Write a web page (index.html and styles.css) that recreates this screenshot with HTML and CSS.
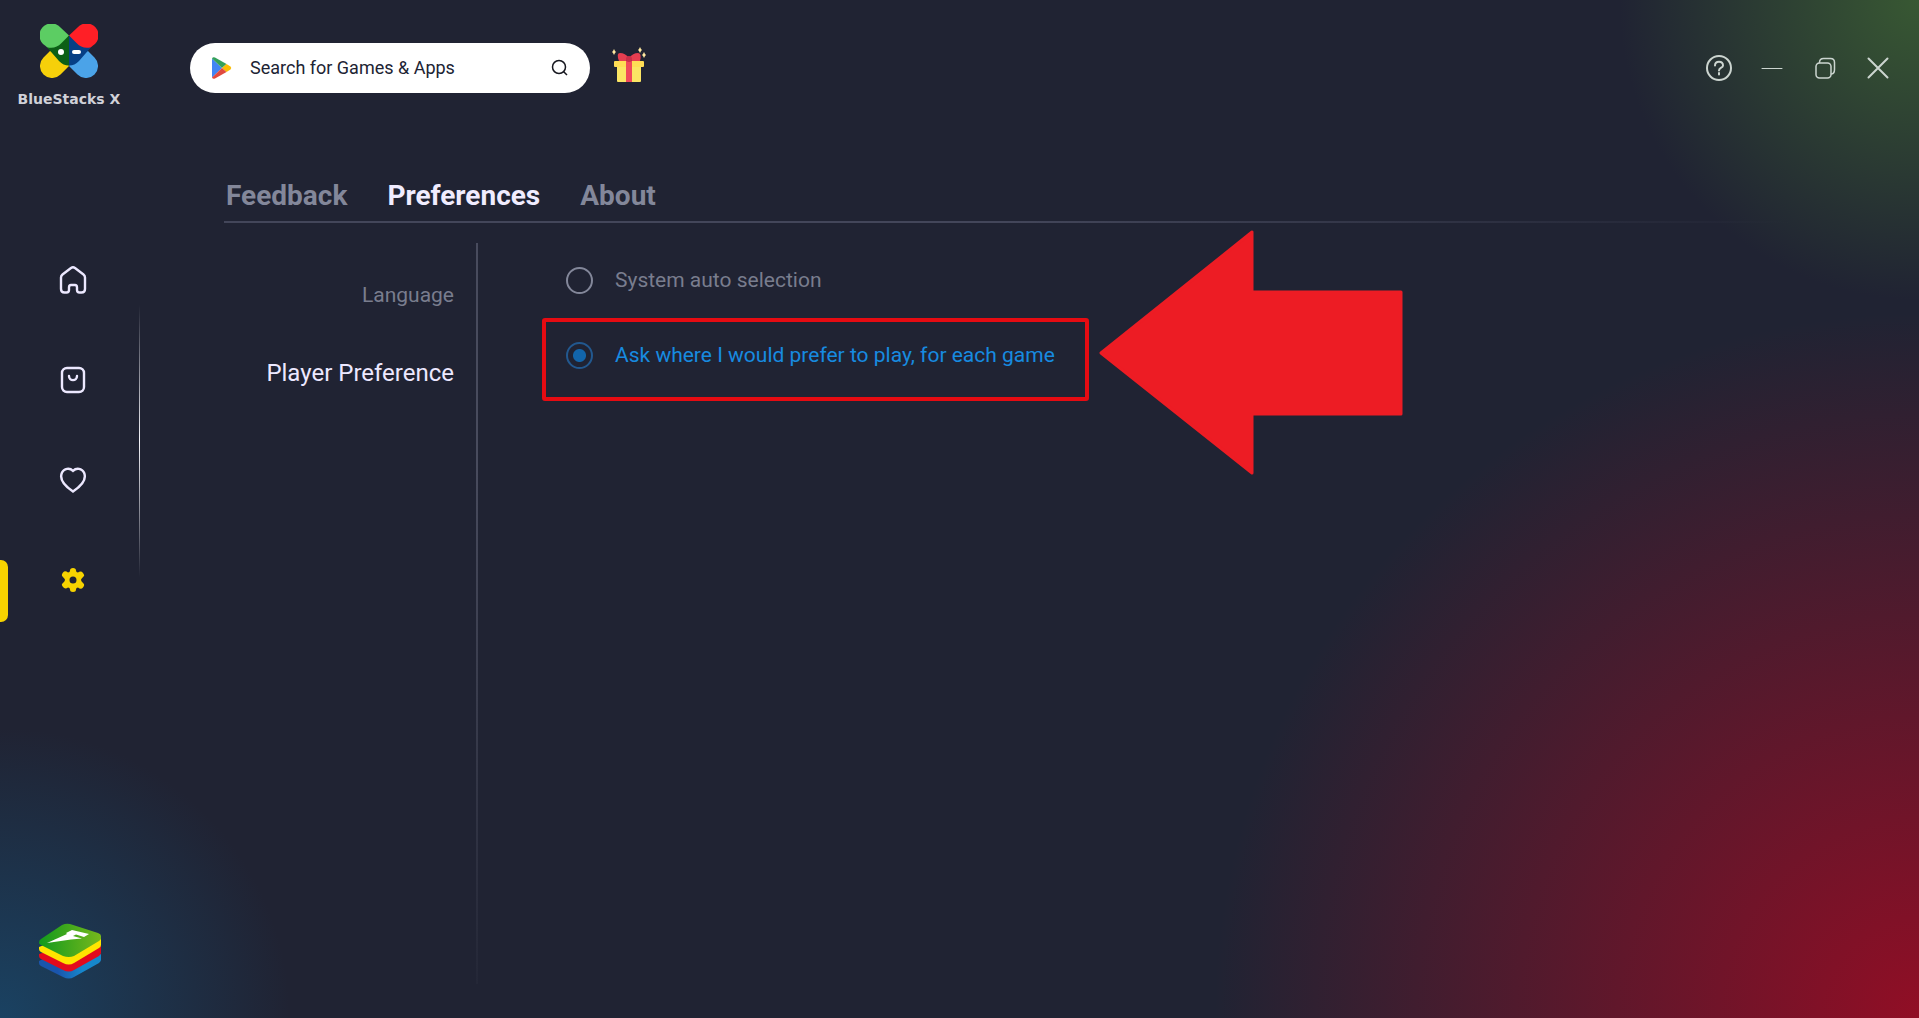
FILE: index.html
```html
<!DOCTYPE html>
<html lang="en">
<head>
<meta charset="utf-8">
<meta name="viewport" content="width=device-width, initial-scale=1">
<title>BlueStacks X</title>
<link rel="stylesheet" href="styles.css">
</head>
<body>
<div class="app">
  <aside class="sidebar">
    <a class="brand" href="#">
      <svg class="brand-mark" viewBox="0 0 58 54" aria-hidden="true">
        <path fill="#5ccd63" d="M29 11.500L20.500 3.500A12 12 0 1 0 5 21.500L11 26.500L20 27Z"/>
        <path fill="#ff1f26" d="M29 11.500L37.500 3.500A12 12 0 1 1 53 21.500L47 26.500L38 27Z"/>
        <path fill="#f6d00a" d="M10 27L3.500 33.500A12 12 0 0 0 20.500 50.500L29 42L24 31Z"/>
        <path fill="#4ba3e8" d="M48 27L54.500 33.500A12 12 0 0 1 37.500 50.500L29 42L34 31Z"/>
        <path fill="#0c5f16" d="M29 11.500V41.500C25 41.500 22 40 19 37L7 23.200C13 25 18 22.500 21 19.500Z"/>
        <path fill="#063f85" d="M29 11.500V41.500C33 41.500 36 40 39 37L51 23.200C45 25 40 22.500 37 19.500Z"/>
        <circle cx="21" cy="28" r="3" fill="#fff"/>
        <rect x="32" y="26" width="9" height="4" rx="2" fill="#fff"/>
      </svg>
      <span class="brand-name">BlueStacks X</span>
    </a>
    <nav class="nav" aria-label="Main">
      <a class="nav-item" href="#" aria-label="Home">
        <svg class="icon" viewBox="0 0 30 30"><path d="M6.500 27.500C4 27.500 3 26 3 24V12.500C3 11 3.500 10.300 4.500 9.500L13 3Q15 1.500 17 3L25.500 9.500C26.500 10.300 27 11 27 12.500V24C27 26 26 27.500 23.500 27.500H21.500C20 27.500 19 26.500 19 25V22.500Q19 20 17 20H13Q11 20 11 22.500V25C11 26.500 10 27.500 8.500 27.500Z"/></svg>
      </a>
      <a class="nav-item" href="#" aria-label="Store">
        <svg class="icon" viewBox="0 0 30 30"><rect x="4" y="3" width="22" height="24" rx="5"/><path d="M11 11C11 16.500 19 16.500 19 11"/></svg>
      </a>
      <a class="nav-item" href="#" aria-label="Favourites">
        <svg class="icon" viewBox="0 0 30 30"><path d="M15 5.800C11.500 2.500 6 3.500 4 7.500C1.500 13 4.500 19.500 15 26.500C25.500 19.500 28.500 13 26 7.500C24 3.500 18.500 2.500 15 5.800Z"/></svg>
      </a>
      <a class="nav-item nav-item-active" href="#" aria-label="Settings" aria-current="page">
        <svg class="icon icon-solid" viewBox="0 0 30 30"><path fill-rule="evenodd" d="M12 5.500Q12 3 15 3T18 5.500Q18 7.500 20 7.500Q23 5.500 25 8T25.500 11.500Q23 14 23 15T25.500 18.500Q27 20 25 22.500T20 22.500Q18 22.500 18 24.500Q18 27 15 27T12 24.500Q12 22.500 10 22.500Q7 24.500 5 22T4.500 18.500Q7 16 7 15T4.500 11.500Q3 10 5 7.500T10 7.500Q12 7.500 12 5.500ZM15 11.500A3.500 3.500 0 1 0 15 18.500A3.500 3.500 0 1 0 15 11.500Z"/></svg>
      </a>
    </nav>
    <a class="player-link" href="#" aria-label="BlueStacks player">
      <svg class="player-mark" viewBox="0 0 62 56">
        <defs><linearGradient id="leaf" x1="0" x2="1"><stop offset="0" stop-color="#119a1c"/><stop offset="1" stop-color="#77b81d"/></linearGradient>
        <linearGradient id="sea" x1="0" x2="1"><stop offset=".3" stop-color="#1a55ad"/><stop offset=".7" stop-color="#1687cc"/></linearGradient></defs>
        <path fill="url(#sea)" d="M0 38L10 33H52L62 31V37Q62 38 60 40L35 54Q30 57 24 54L2 43Q0 42 0 40Z"/>
        <path fill="#e30a1c" d="M0 31L10 28H52L62 23V30Q62 31 60 33L35 47Q30 50 24 47L2 36Q0 35 0 33Z"/>
        <path fill="#ffe500" d="M0 24L10 20H52L62 15V22Q62 24 60 25L35 40Q30 43 24 40L2 29Q0 28 0 26Z"/>
        <path fill="url(#leaf)" d="M2 16L23 2Q27 0 31 1L59 10Q62 11 62 13V15Q62 17 60 18L35 33Q30 35 24 33L2 22Q0 21 0 20Q0 17 2 16Z"/>
        <path fill="#fff" d="M8 20L28 11L27 10L33 7L50 11L45 14L37 11.500L34 13L43 15.500L32 16.500Z"/>
      </svg>
    </a>
  </aside>
  <div class="page">
    <header class="topbar">
      <form class="search" role="search">
        <svg class="play" viewBox="0 0 20 22" aria-hidden="true"><path fill="#4285f4" d="M0 1.500V20.500L10 11Z"/><path fill="#34a05a" d="M0 1.500Q1 -.5 3 .5L14.500 7L10 11Z"/><path fill="#fbbc04" d="M14.500 7L18.500 9.500Q20 11 18.500 12.500L14.500 15L10 11Z"/><path fill="#e04a3f" d="M0 20.500Q1 22.500 3 21.500L14.500 15L10 11Z"/></svg>
        <input class="search-input" type="text" aria-label="Search for Games &amp; Apps" placeholder="Search for Games &amp; Apps">
        <button class="search-button" type="submit" aria-label="Search"><svg class="search-icon" viewBox="0 0 18 18"><circle cx="8" cy="8" r="6.500"/><path d="M12.500 12.500L16 16"/></svg></button>
      </form>
      <button class="gift" type="button" aria-label="Rewards">
        <svg class="gift-icon" viewBox="0 0 34 36">
          <path fill="#fbe564" d="M5 17H29V34Q29 35 28 35H6Q5 35 5 34Z"/><path fill="#ffdd55" d="M3 14H31Q32 14 32 15V19Q32 20 31 20H3Q2 20 2 19V15Q2 14 3 14Z"/>
          <path fill="#f0485a" d="M14 14H20V35H14Z"/><path fill="#e53e50" d="M7 14Q4 6 8 6Q13 6 17 11Q21 6 26 6Q30 6 28 14H20L17 12L14 14Z"/><circle cx="17" cy="12" r="3" fill="#c92f48"/>
          <path fill="#ffe9a0" d="M2 2L3 4L4 5L3 6L2 8L1 6L0 5L1 4ZM28 0L29 2L30 3L29 4L28 6L27 4L26 3L27 2ZM32 5L33 7L34 8L33 9L32 11L31 9L30 8L31 7Z"/>
        </svg>
      </button>
      <div class="window-controls">
        <button class="window-button" type="button" aria-label="Help"><svg class="control-icon" viewBox="0 0 28 28"><circle cx="14" cy="14" r="12" stroke-width="2"/><path stroke-width="2" d="M10 11.500C10 6.500 18 6.500 18 11.500C18 14 14 13.500 14 16.500M14 19V20.500"/></svg></button>
        <button class="window-button" type="button" aria-label="Minimize"><svg class="control-icon" viewBox="0 0 28 28"><path stroke-width="1" d="M4 14.500H24"/></svg></button>
        <button class="window-button" type="button" aria-label="Restore"><svg class="control-icon" viewBox="0 0 28 28"><rect x="5" y="9" width="15" height="15" rx="3.500"/><path d="M8.500 8.500Q8.500 4.500 12.500 4.500H19.500Q23.500 4.500 23.500 8.500V15.500Q23.500 19.500 20.500 20"/></svg></button>
        <button class="window-button" type="button" aria-label="Close"><svg class="control-icon" viewBox="0 0 28 28"><path stroke-width="2" d="M4.500 4.500L23.500 23.500M23.500 4.500L4.500 23.500"/></svg></button>
      </div>
    </header>
    <main class="settings">
      <nav class="tabs" aria-label="Settings">
        <a class="tab" href="#">Feedback</a>
        <a class="tab tab-active" href="#" aria-current="page">Preferences</a>
        <a class="tab" href="#">About</a>
      </nav>
      <div class="columns">
        <nav class="sections" aria-label="Preferences">
          <a class="section" href="#">Language</a>
          <a class="section section-active" href="#" aria-current="page">Player Preference</a>
        </nav>
        <div class="options">
          <label class="option"><input class="radio" type="radio" name="player"><span>System auto selection</span></label>
          <div class="callout">
            <label class="option option-selected"><input class="radio" type="radio" name="player" checked><span>Ask where I would prefer to play, for each game</span></label>
            <svg class="arrow" viewBox="0 0 304 246" aria-hidden="true"><path d="M2 123L153 2V62H302V184H153V243Z"/></svg>
          </div>
        </div>
      </div>
    </main>
  </div>
</div>
</body>
</html>
```
FILE: styles.css
```css
* { box-sizing: border-box; }

body {
  margin: 0;
  font-family: Roboto, "Liberation Sans", sans-serif;
  color: #ece8ff;
  background: #202333;
}

a { color: inherit; text-decoration: none; }

button {
  padding: 0;
  border: 0;
  background: none;
  color: inherit;
}

svg { display: block; }

.app {
  display: flex;
  min-height: 100vh;
  background:
    radial-gradient(circle 300px at 100% 0, #385833, transparent),
    radial-gradient(circle 705px at 100% 100%, #910e25, transparent),
    radial-gradient(circle 290px at 0 100%, #1a4262, transparent);
}

/* Sidebar */

.sidebar {
  position: relative;
  flex: none;
  display: flex;
  flex-direction: column;
  width: 140px;
  padding: 24px 0 39px;
}

.sidebar::after {
  content: "";
  position: absolute;
  top: 305px;
  right: 0;
  width: 1px;
  height: 272px;
  background: linear-gradient(transparent, #f4f4fa, transparent);
}

.brand {
  display: flex;
  flex-direction: column;
  align-items: center;
  gap: 12px;
  height: 206px;
  padding-right: 2px;
}

.brand-mark { width: 58px; height: 54px; }

.brand-name {
  font: 700 14px/18px "DejaVu Sans", sans-serif;
  color: #d0d1d8;
  white-space: nowrap;
}

.nav { padding-left: 6px; }

.nav-item {
  position: relative;
  display: flex;
  align-items: center;
  justify-content: center;
  height: 100px;
}

.nav-item-active::before {
  content: "";
  position: absolute;
  top: 30px;
  left: -6px;
  width: 8px;
  height: 62px;
  border-radius: 0 7px 7px 0;
  background: #f7d300;
}

.icon {
  width: 30px;
  height: 30px;
  fill: none;
  stroke: #ece8ff;
  stroke-width: 2.4;
  stroke-linecap: round;
}

.icon-solid { fill: #f7d300; stroke: none; }

.player-link { margin: auto auto 0; }

.player-mark { width: 62px; height: 56px; }

/* Top bar */

.page {
  flex: 1;
  min-width: 0;
  display: flex;
  flex-direction: column;
}

.topbar {
  display: flex;
  align-items: center;
  gap: 22px;
  padding: 43px 27px 0 50px;
}

.search {
  display: flex;
  align-items: center;
  width: 400px;
  height: 50px;
  padding: 0 21px 0 22px;
  border-radius: 25px;
  background: #fff;
}

.play { width: 20px; height: 22px; }

.search-input {
  flex: 1;
  min-width: 0;
  margin-left: 18px;
  padding: 0;
  border: 0;
  outline: 0;
  background: none;
  font: 18px/24px Roboto, "Liberation Sans", sans-serif;
  color: #202333;
}

.search-input::placeholder { color: #202333; opacity: 1; }

.search-icon {
  width: 18px;
  height: 18px;
  fill: none;
  stroke: #16171f;
  stroke-width: 1.5;
}

.gift { padding-bottom: 6px; }

.gift-icon { width: 34px; height: 36px; }

.window-controls {
  display: flex;
  gap: 25px;
  margin-left: auto;
}

.control-icon {
  width: 28px;
  height: 28px;
  fill: none;
  stroke: #ccd5d0;
  stroke-width: 1.5;
  stroke-linecap: round;
}

/* Settings */

.settings {
  flex: 1;
  display: flex;
  flex-direction: column;
  padding: 87px 130px 34px 84px;
}

.tabs {
  display: flex;
  gap: 40px;
  padding: 0 2px 9px;
  border-bottom: 2px solid;
  border-image: linear-gradient(90deg, #43465a 50%, transparent) 1;
  font-size: 28px;
  line-height: 32px;
  font-weight: 700;
}

.tab { color: #83879a; }
.tab-active { color: #f0ecff; }

.columns {
  flex: 1;
  display: flex;
  padding-top: 20px;
}

.sections {
  display: flex;
  flex-direction: column;
  gap: 48px;
  width: 254px;
  padding: 37px 22px 0 0;
  text-align: right;
  border-right: 2px solid;
  border-image: linear-gradient(#484b5d 30%, #3a3d4e 60%, #242737) 1;
}

.section {
  font-size: 21px;
  line-height: 30px;
  color: #797d8e;
}

.section-active { font-size: 24px; color: #ece8ff; }

.options {
  display: flex;
  flex-direction: column;
  align-items: flex-start;
  gap: 22px;
  padding: 21px 0 0 64px;
}

.option {
  display: flex;
  align-items: center;
  gap: 22px;
  height: 32px;
  padding-left: 24px;
  font-size: 21px;
  color: #797d8e;
}

.radio {
  appearance: none;
  width: 27px;
  height: 27px;
  margin: 0;
  border: 2px solid #83879a;
  border-radius: 50%;
}

.radio:checked {
  border-color: #22588f;
  background: radial-gradient(circle, #1265ab 6px, transparent 7px);
}

.callout {
  position: relative;
  width: 547px;
  height: 83px;
  padding-top: 17px;
  border: 4px solid #e60b12;
  border-radius: 3px;
}

.callout .option { padding-left: 20px; }

.callout .option-selected { color: #178be0; }

.arrow {
  position: absolute;
  top: -92px;
  left: 553px;
  width: 304px;
  height: 246px;
  fill: #ed1c24;
  stroke: #ed1c24;
  stroke-width: 3;
  stroke-linejoin: round;
}
```
